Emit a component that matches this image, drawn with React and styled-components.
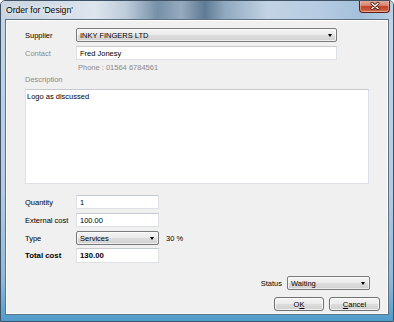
import React from 'react';
import styled, { createGlobalStyle } from 'styled-components';

const GlobalStyle = createGlobalStyle`
  html, body {
    margin: 0;
    padding: 0;
    background: #ffffff;
  }
  body {
    font-family: 'Liberation Sans', Arial, sans-serif;
  }
`;

const Window = styled.div`
  width: 394px;
  height: 322px;
  box-sizing: border-box;
  display: flex;
  flex-direction: column;
  border: 1px solid #3f5164;
  border-radius: 5px 5px 0 0;
  overflow: hidden;
  background: linear-gradient(180deg, #c4d6e9 0%, #b3cbe3 60%, #8db8dc 88%, #4f9ccb 100%);
`;

const TitleBar = styled.div`
  height: 18px;
  flex: none;
  display: flex;
  justify-content: space-between;
  align-items: flex-start;
  background: linear-gradient(90deg, #c8d4e0 0%, #dde5ee 24%, #bccbda 32%, #7690a8 40%, #95aabf 46%, #5f7a94 52%, #8fa8bf 57%, #c2d3e4 68%, #b4cbe2 82%, #a3bfda 92%, #b9d0e6 100%);
`;

const Title = styled.span`
  font-size: 8.6px;
  line-height: 18px;
  padding-left: 5px;
  color: #000;
  text-shadow: 0 0 4px rgba(255, 255, 255, 0.95), 0 0 8px rgba(255, 255, 255, 0.7);
`;

const CloseButton = styled.div`
  width: 31px;
  height: 13px;
  margin-right: 3px;
  margin-top: -1px;
  box-sizing: border-box;
  display: flex;
  align-items: center;
  justify-content: center;
  border: 1px solid #5a1f14;
  border-top: none;
  border-radius: 0 0 4px 4px;
  background: linear-gradient(180deg, #e8b0a3 0%, #d98470 45%, #c0432a 55%, #c95a3c 85%, #e08a6c 100%);
  box-shadow: inset 0 0 0 1px rgba(255, 200, 180, 0.5);
`;

const ClientFrame = styled.div`
  flex: 1;
  margin: 0 4px 6px 4px;
  border: 1px solid #5e7185;
  box-shadow: inset 0 0 0 1px #ffffff;
  background: #f0f0f0;
  display: flex;
  flex-direction: column;
  padding: 8px 8px 3px 19px;
  font-size: 7.5px;
  color: #000;
`;

const Row = styled.div`
  display: flex;
  align-items: center;
  height: ${p => p.$h || 14}px;
  margin-top: ${p => p.$mt || 0}px;
`;

const Label = styled.div`
  width: 51px;
  flex: none;
  color: ${p => (p.$muted ? '#8a8a8a' : '#000')};
  font-weight: ${p => (p.$bold ? 'bold' : 'normal')};
  font-size: ${p => (p.$bold ? '7.8px' : '7.5px')};
`;

const TextBox = styled.div`
  width: ${p => p.$w}px;
  height: 100%;
  box-sizing: border-box;
  background: #fff;
  border: 1px solid #dde1e6;
  border-top-color: #c5cad1;
  padding-left: 3px;
  display: flex;
  align-items: center;
  font-weight: ${p => (p.$bold ? 'bold' : 'normal')};
  font-size: ${p => (p.$bold ? '7.8px' : '7.5px')};
`;

const Combo = styled.div`
  position: relative;
  width: ${p => p.$w}px;
  height: 100%;
  box-sizing: border-box;
  border: 1px solid #7a7a7a;
  border-radius: 2px;
  background: linear-gradient(180deg, #f4f4f4 0%, #ebebeb 48%, #dddddd 52%, #d0d0d0 100%);
  box-shadow: inset 0 0 0 1px rgba(255, 255, 255, 0.6);
  padding-left: 3px;
  display: flex;
  align-items: center;

  &::after {
    content: '';
    position: absolute;
    right: 4px;
    top: 5px;
    border-left: 2.5px solid transparent;
    border-right: 2.5px solid transparent;
    border-top: 3px solid #000;
  }
`;

const Note = styled.div`
  margin-top: ${p => p.$mt}px;
  margin-left: ${p => p.$ml || 0}px;
  height: 10px;
  line-height: 10px;
  color: #8a8a8a;
`;

const TextArea = styled.div`
  margin-top: 4px;
  width: 344px;
  height: 95px;
  box-sizing: border-box;
  background: #fff;
  border: 1px solid #dde1e6;
  border-top-color: #c5cad1;
  padding: 2px 1px;
  line-height: 9px;
`;

const Suffix = styled.span`
  margin-left: 7px;
`;

const Footer = styled.div`
  margin-top: auto;
  display: flex;
  flex-direction: column;
  align-items: flex-end;
`;

const StatusRow = styled.div`
  display: flex;
  align-items: center;
  gap: 5px;
  height: 14px;
  margin-right: 10px;
`;

const ButtonRow = styled.div`
  display: flex;
  gap: 5px;
  margin-top: 7px;
`;

const Button = styled.div`
  width: ${p => p.$w}px;
  height: 14px;
  box-sizing: border-box;
  border: 1px solid #707070;
  border-radius: 3px;
  background: linear-gradient(180deg, #f4f4f4 0%, #ebebeb 48%, #dddddd 52%, #cfcfcf 100%);
  box-shadow: inset 0 0 0 1px rgba(255, 255, 255, 0.7);
  display: flex;
  align-items: center;
  justify-content: center;

  u {
    text-decoration: underline;
  }
`;

const App = () => {
  return (
    <>
      <GlobalStyle />
      <Window>
        <TitleBar>
          <Title>Order for 'Design'</Title>
          <CloseButton>
            <svg width="10" height="8" viewBox="0 0 10 8">
              <path d="M2 1.5 L8 6.5 M8 1.5 L2 6.5" stroke="#4a1a10" strokeWidth="3" strokeLinecap="round" fill="none" />
              <path d="M2 1.5 L8 6.5 M8 1.5 L2 6.5" stroke="#ffffff" strokeWidth="1.6" strokeLinecap="round" fill="none" />
            </svg>
          </CloseButton>
        </TitleBar>
        <ClientFrame>
          <Row>
            <Label>Supplier</Label>
            <Combo $w={261}>INKY FINGERS LTD</Combo>
          </Row>
          <Row $mt={4}>
            <Label $muted>Contact</Label>
            <TextBox $w={261}>Fred Jonesy</TextBox>
          </Row>
          <Note $mt={3} $ml={53}>Phone : 01564 6784561</Note>
          <Note $mt={2}>Description</Note>
          <TextArea>Logo as discussed</TextArea>
          <Row $mt={11}>
            <Label>Quantity</Label>
            <TextBox $w={83}>1</TextBox>
          </Row>
          <Row $mt={4}>
            <Label>External cost</Label>
            <TextBox $w={83}>100.00</TextBox>
          </Row>
          <Row $mt={4}>
            <Label>Type</Label>
            <Combo $w={83}>Services</Combo>
            <Suffix>30 %</Suffix>
          </Row>
          <Row $mt={3} $h={15}>
            <Label $bold>Total cost</Label>
            <TextBox $w={83} $bold>130.00</TextBox>
          </Row>
          <Footer>
            <StatusRow>
              <span>Status</span>
              <Combo $w={83}>Waiting</Combo>
            </StatusRow>
            <ButtonRow>
              <Button $w={50}>O<u>K</u></Button>
              <Button $w={51}><u>C</u>ancel</Button>
            </ButtonRow>
          </Footer>
        </ClientFrame>
      </Window>
    </>
  );
};

export default App;
